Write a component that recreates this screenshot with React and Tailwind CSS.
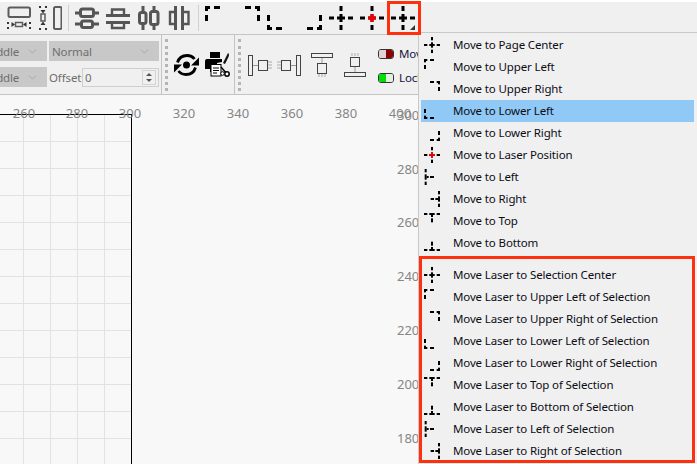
import { ChevronDown } from 'lucide-react'

const FONT = "font-['Noto_Sans',sans-serif]"

// dashes of the move icons, drawn on a 24 unit box
const H_MID = [[0, 10.5, 5, 3], [8, 10.5, 8, 3], [19, 10.5, 5, 3]]
const V_MID = [[10.5, 0, 3, 5], [10.5, 8, 3, 8], [10.5, 19, 3, 5]]

const MOVE_SHAPES = {
  center: [...H_MID, ...V_MID],
  upperLeft: [[0, 0, 5, 3], [0, 0, 3, 5], [9, 0, 6, 3], [0, 9, 3, 6]],
  upperRight: [[19, 0, 5, 3], [21, 0, 3, 5], [9, 0, 6, 3], [21, 9, 3, 6]],
  lowerLeft: [[0, 21, 5, 3], [0, 19, 3, 5], [9, 21, 6, 3], [0, 9, 3, 6]],
  lowerRight: [[19, 21, 5, 3], [21, 19, 3, 5], [9, 21, 6, 3], [21, 9, 3, 6]],
  left: [[1, 0, 3, 5], [1, 8, 3, 8], [1, 19, 3, 5], [4, 10.5, 3, 3], [9, 10.5, 6, 3]],
  right: [[21, 0, 3, 5], [21, 8, 3, 8], [21, 19, 3, 5], [17, 10.5, 4, 3], [10, 10.5, 5, 3]],
  top: [[0, 0, 5, 3], [8, 0, 8, 3], [19, 0, 5, 3], [10.5, 3, 3, 3], [10.5, 8, 3, 6]],
  bottom: [[0, 21, 5, 3], [8, 21, 8, 3], [19, 21, 5, 3], [10.5, 18, 3, 3], [10.5, 10, 3, 6]],
}

function MoveIcon({ shape, size = 16, laser = false, menu = false }) {
  return (
    <svg width={size} height={size} viewBox="0 0 24 24" className="shrink-0">
      {MOVE_SHAPES[shape].map(([x, y, w, h], i) => (
        <rect key={i} x={x} y={y} width={w} height={h} fill="#000" />
      ))}
      {laser && <path d="M8 10.5h8v3H8zM10.5 8h3v8h-3z" fill="#f00000" />}
      {menu && <path d="M24 19v5h-5z" fill="#333" />}
    </svg>
  )
}

function AlignIcon({ kind }) {
  const rotate = kind === 'midV' || kind === 'edgeV' ? 'rotate(90 12 12)' : undefined
  const mid = kind === 'midH' || kind === 'midV'
  return (
    <svg width="24" height="24" viewBox="0 0 24 24" fill="none" stroke="#555" strokeWidth="3" className="shrink-0">
      <g transform={rotate}>
        {mid ? (
          <>
            <path d="M0 7h5M19 7h5M0 18h6M18 18h6" />
            <rect x="5.500" y="3" width="13" height="7.500" rx="2" />
            <rect x="6.500" y="15" width="11" height="6.500" rx="2" />
          </>
        ) : (
          <>
            <path d="M0 9.500h24M0 16.500h24" />
            <path d="M6 9.500V3.500h12v6M6 16.500V22h12v-5.500" strokeWidth="2.400" />
          </>
        )}
      </g>
    </svg>
  )
}

function SpaceHIcon() {
  return (
    <svg width="24" height="24" viewBox="0 0 24 24" fill="none" className="shrink-0">
      <rect x="1.500" y="1.500" width="21.500" height="9.500" rx="1.500" stroke="#5c5c5c" strokeWidth="2" />
      <path d="M1 16v2M1 21v2M23 16v2M23 21v2" stroke="#333" strokeWidth="2" />
      <rect x="8.500" y="16.500" width="7" height="4" stroke="#5c5c5c" strokeWidth="1.500" />
      <path d="M8 18.500l-3.500-2.500v5zM16 18.500l3.500-2.500v5z" fill="#333" />
    </svg>
  )
}

function SpaceVIcon() {
  return (
    <svg width="24" height="24" viewBox="0 0 24 24" fill="none" className="shrink-0">
      <rect x="16" y="1" width="7.500" height="22" rx="1.500" stroke="#5c5c5c" strokeWidth="2" />
      <path d="M1 1h2M7 1h2M1 23h2M7 23h2" stroke="#333" strokeWidth="2" />
      <rect x="3" y="8" width="4" height="7" stroke="#5c5c5c" strokeWidth="1.500" />
      <path d="M5 7.500L2.500 4h5zM5 15.500L2.500 19h5z" fill="#333" />
    </svg>
  )
}

function RefreshIcon() {
  return (
    <svg width="25" height="24" viewBox="0 0 25 24" fill="none" className="shrink-0">
      <circle cx="12.500" cy="12" r="3.500" fill="#000" />
      <path d="M3.500 9.500C5 4.500 9 2.500 13 2.500c3.500 0 6 1.500 7.500 3.500" stroke="#000" strokeWidth="2.800" />
      <path d="M21.500 14.500C20 19.500 16 21.500 12 21.500c-3.500 0-6-1.500-7.500-3.500" stroke="#000" strokeWidth="2.800" />
      <path d="M25 4.500v8h-8zM0 19.500v-8h8z" fill="#000" />
    </svg>
  )
}

function PrinterIcon() {
  return (
    <svg width="25" height="25" viewBox="0 0 25 25" className="shrink-0">
      <path d="M5 0h10v6H5zM2 7h15v3l-5 1v9H5v-3H0V9q0-2 2-2z" fill="#000" />
      <path d="M18 11l5-10q2 1 0 5l-3 6z" fill="#111" />
      <rect x="6" y="12.500" width="10" height="11.500" fill="#fff" stroke="#000" />
      <path d="M8 16h6M8 18.500h6M8 21h4" stroke="#000" />
      <path d="M16 15l6 7" stroke="#000" strokeWidth="1.500" />
      <circle cx="22" cy="22" r="2.200" fill="#fff" stroke="#000" strokeWidth="1.500" />
      <circle cx="17.500" cy="21.500" r="1.800" fill="#fff" stroke="#000" />
    </svg>
  )
}

// the four small align-to-edge drawings in the second toolbar
function EdgeIcon({ kind }) {
  const box = 'fill-[#f0f0f0] stroke-[#444]'
  return (
    <svg width="26" height="26" viewBox="0 0 26 26" fill="none" className="shrink-0">
      {kind === 'left' && (
        <>
          <rect x="1.500" y="3.500" width="4" height="20" className={box} />
          <path d="M6 13.500h5" stroke="#999" />
          <rect x="11.500" y="8.500" width="9" height="10" className={box} />
          <path d="M21 10h4M21 13h4M21 16h4" stroke="#aaa" />
        </>
      )}
      {kind === 'right' && (
        <>
          <path d="M1 10h4M1 13h4M1 16h4" stroke="#aaa" />
          <rect x="5.500" y="8.500" width="9" height="10" className={box} />
          <path d="M15 13.500h5" stroke="#999" />
          <rect x="20.500" y="3.500" width="4" height="20" className={box} />
        </>
      )}
      {kind === 'top' && (
        <>
          <rect x="2.500" y="1.500" width="21" height="4" className={box} />
          <path d="M13 6v5" stroke="#999" />
          <rect x="8.500" y="11.500" width="9" height="10" className={box} />
          <path d="M10 22v3M13 22v3M16 22v3" stroke="#aaa" />
        </>
      )}
      {kind === 'bottom' && (
        <>
          <path d="M10 1v3M13 1v3M16 1v3" stroke="#aaa" />
          <rect x="8.500" y="5.500" width="9" height="9" className={box} />
          <path d="M13 15v5" stroke="#999" />
          <rect x="2.500" y="20.500" width="21" height="4" className={box} />
        </>
      )}
    </svg>
  )
}

function Dots() {
  return <div className="w-[3px] h-[52px] self-center border-l-[3px] border-dotted border-[#b4b4b4]" />
}

function Dropdown({ label, clip = false }) {
  return (
    <div className="h-[20px] bg-[#c8c8c8] flex items-center justify-between pr-[8px] overflow-hidden">
      <span className={`text-[11.5px] pt-px text-[#6e6e6e] tracking-[-0.13px] ${clip ? '-ml-[17px]' : 'ml-[3px]'}`}>{label}</span>
      <ChevronDown size={13} strokeWidth={1} className="text-[#8c8c8c]" />
    </div>
  )
}

const MENU_TOP = [
  ['center', 'Move to Page Center'],
  ['upperLeft', 'Move to Upper Left'],
  ['upperRight', 'Move to Upper Right'],
  ['lowerLeft', 'Move to Lower Left'],
  ['lowerRight', 'Move to Lower Right'],
  ['center', 'Move to Laser Position', true],
  ['left', 'Move to Left'],
  ['right', 'Move to Right'],
  ['top', 'Move to Top'],
  ['bottom', 'Move to Bottom'],
]

const MENU_LASER = [
  ['center', 'Move Laser to Selection Center'],
  ['upperLeft', 'Move Laser to Upper Left of Selection'],
  ['upperRight', 'Move Laser to Upper Right of Selection'],
  ['lowerLeft', 'Move Laser to Lower Left of Selection'],
  ['lowerRight', 'Move Laser to Lower Right of Selection'],
  ['top', 'Move Laser to Top of Selection'],
  ['bottom', 'Move Laser to Bottom of Selection'],
  ['left', 'Move Laser to Left of Selection'],
  ['right', 'Move Laser to Right of Selection'],
]

function MenuRow({ shape, label, laser, active }) {
  return (
    <div className={`h-[22px] flex items-center pl-[3px] gap-[13px] ${active ? 'bg-[#90c8f6]' : ''}`}>
      <MoveIcon shape={shape} laser={laser} />
      <span className="text-[11.5px] leading-none tracking-[-0.13px] text-[#0c0c14] whitespace-nowrap">{label}</span>
    </div>
  )
}

const RULER_X = [[24, '260'], [77, '280'], [130, '300'], [184, '320'], [238, '340'], [292, '360'], [346, '380'], [400, '400']]
const RULER_Y = [[115, '300'], [169, '280'], [222, '260'], [276, '240'], [330, '220'], [384, '200'], [438, '180']]

export default function App() {
  return (
    <div className={`relative w-[697px] h-[464px] overflow-hidden bg-[#f8f8f8] flex flex-col ${FONT}`}>

      {/* top toolbar */}
      <div className="h-[35px] shrink-0 bg-[#f0f0f0] border-t-2 border-t-white border-b border-b-[#c4c4c4] flex items-center gap-[7px] pl-[7px]">
        <SpaceHIcon />
        <SpaceVIcon />
        <div className="w-px h-[26px] bg-[#d0d0d0] -mx-px" />
        <AlignIcon kind="midH" />
        <AlignIcon kind="edgeH" />
        <AlignIcon kind="midV" />
        <AlignIcon kind="edgeV" />
        <div className="w-px h-[26px] bg-[#d0d0d0] -mx-px" />
        <MoveIcon size={24} shape="upperLeft" />
        <MoveIcon size={24} shape="upperRight" />
        <MoveIcon size={24} shape="lowerLeft" />
        <MoveIcon size={24} shape="lowerRight" />
        <MoveIcon size={24} shape="center" />
        <MoveIcon size={24} shape="center" laser />
        <MoveIcon size={24} shape="center" menu />
      </div>

      {/* second toolbar */}
      <div className="h-[60px] shrink-0 bg-[#f0f0f0] border-b border-b-[#c4c4c4] flex">
        <div className="w-[47px] pt-[6px] flex flex-col gap-[6px]">
          <Dropdown label="Middle" clip />
          <Dropdown label="Middle" clip />
        </div>
        <div className="w-[110px] ml-[2px] pt-[6px] flex flex-col gap-[7px]">
          <Dropdown label="Normal" />
          <div className="flex items-center h-[19px]">
            <span className="text-[11.5px] tracking-[-0.13px] pt-px text-[#6e6e6e] w-[33px] whitespace-nowrap">Offset</span>
            <div className="flex-1 h-[19px] border border-[#cfcfcf] flex items-center justify-between text-[11.5px] text-[#6e6e6e] pl-[2px] pr-[2px]">
              0
              <div className="w-[14px] h-[15px] border border-[#d4d4d4] flex flex-col items-center justify-center gap-[3px]">
                <div className="w-0 h-0 border-x-[3px] border-x-transparent border-b-[3px] border-b-[#555]" />
                <div className="w-0 h-0 border-x-[3px] border-x-transparent border-t-[3px] border-t-[#555]" />
              </div>
            </div>
          </div>
        </div>
        <div className="ml-[2px] w-px bg-[#c4c4c4]" />
        <div className="ml-[3px] flex items-center"><Dots /></div>
        <div className="ml-[6px] flex items-center gap-[6px]">
          <RefreshIcon />
          <PrinterIcon />
        </div>
        <div className="ml-[4px] w-px bg-[#c4c4c4]" />
        <div className="ml-[3px] flex items-center"><Dots /></div>
        <div className="ml-[6px] flex items-center gap-[3px]">
          <EdgeIcon kind="left" />
          <EdgeIcon kind="right" />
          <div className="ml-[4px]"><EdgeIcon kind="top" /></div>
          <div className="ml-[4px]"><EdgeIcon kind="bottom" /></div>
        </div>
        <div className="ml-[10px] pt-[12px] flex flex-col gap-[10px] text-[11.5px] leading-none tracking-[-0.13px] text-[#14143c]">
          <div className="flex items-center gap-[5px] h-[14px]">
            <div className="w-[16px] h-[10px] rounded-[3px] border border-[#333] flex overflow-hidden">
              <div className="flex-1 bg-[#e0d4d4]" />
              <div className="flex-1 bg-[#8c0000]" />
            </div>
            Move
          </div>
          <div className="flex items-center gap-[5px] h-[14px]">
            <div className="w-[16px] h-[10px] rounded-[3px] border border-[#333] flex overflow-hidden">
              <div className="flex-1 bg-[#00e000]" />
              <div className="flex-1 bg-[#e4efe4]" />
            </div>
            Lock
          </div>
        </div>
      </div>

      {/* page sheet with its grid */}
      <div className="absolute left-0 top-[114px] w-[132px] h-[350px] border-t border-r border-black bg-[linear-gradient(#e2e2e2_1px,transparent_1px),linear-gradient(90deg,#e2e2e2_1px,transparent_1px)] bg-[size:27px_27px] bg-[position:23px_26px]" />

      {/* ruler numbers */}
      {RULER_X.map(([x, label]) => (
        <span key={label} style={{ left: x - 15 }} className="absolute top-[103px] w-[30px] text-center text-[13px] leading-[20px] text-[#868686]">{label}</span>
      ))}
      {RULER_Y.map(([y, label]) => (
        <span key={label} style={{ top: y - 10 }} className="absolute left-[397px] text-[13px] leading-[20px] text-[#868686]">{label}</span>
      ))}

      {/* dropdown menu */}
      <div className="absolute left-[418px] top-[32px] w-[279px] h-[432px] bg-[#f0f0f0] border-l border-t border-[#c8c8c8] pl-[2px] pr-[3px] pt-[1px]">
        {MENU_TOP.map(([shape, label, laser]) => (
          <MenuRow key={label} shape={shape} label={label} laser={laser} active={label === 'Move to Lower Left'} />
        ))}
        <div className="mt-[10px]">
          {MENU_LASER.map(([shape, label]) => (
            <MenuRow key={label} shape={shape} label={label} />
          ))}
        </div>
      </div>

      {/* red annotations */}
      <div className="absolute left-[387px] top-[1px] w-[34px] h-[34px] border-[3px] border-[#ff3010] pointer-events-none" />
      <div className="absolute left-[419px] top-[256px] w-[276px] h-[207px] border-[3px] border-[#ff3010] pointer-events-none" />
    </div>
  )
}
